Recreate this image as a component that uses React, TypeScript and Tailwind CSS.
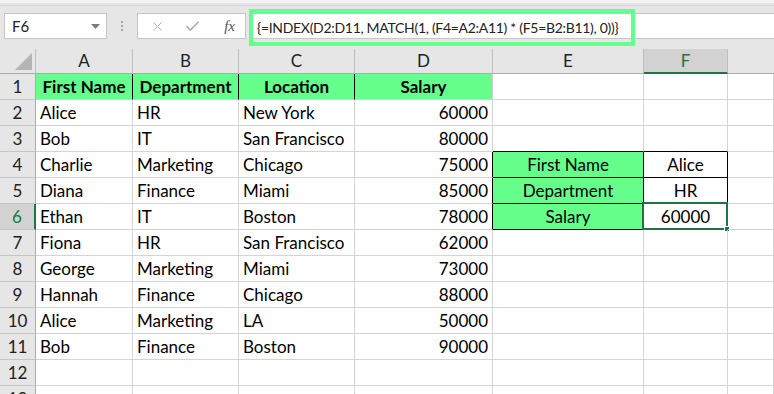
import React from "react";
import { X, Check } from "lucide-react";

type Row = {
    a?: string;
    b?: string;
    c?: string;
    d?: string;
    e?: string;
    f?: string;
};

const rows: Row[] = [
    { a: "First Name", b: "Department", c: "Location", d: "Salary" },
    { a: "Alice", b: "HR", c: "New York", d: "60000" },
    { a: "Bob", b: "IT", c: "San Francisco", d: "80000" },
    { a: "Charlie", b: "Marketing", c: "Chicago", d: "75000", e: "First Name", f: "Alice" },
    { a: "Diana", b: "Finance", c: "Miami", d: "85000", e: "Department", f: "HR" },
    { a: "Ethan", b: "IT", c: "Boston", d: "78000", e: "Salary", f: "60000" },
    { a: "Fiona", b: "HR", c: "San Francisco", d: "62000" },
    { a: "George", b: "Marketing", c: "Miami", d: "73000" },
    { a: "Hannah", b: "Finance", c: "Chicago", d: "88000" },
    { a: "Alice", b: "Marketing", c: "LA", d: "50000" },
    { a: "Bob", b: "Finance", c: "Boston", d: "90000" },
    {},
    {},
];

const font = { fontFamily: "Lato, 'Open Sans', sans-serif" };

const Cell = ({ className, children }: { className: string; children?: React.ReactNode }) => (
    <div className={`relative flex items-center px-[4px] border-r border-b whitespace-nowrap overflow-visible text-[17px] text-black ${className}`}>
        {children}
    </div>
);

const TopBar = () => (
    <div className="h-[49px] bg-[#e6e6e6] border-t-[3px] border-t-[#f3f3f3] relative">
        <div className="absolute top-[2px] left-0 right-0 h-px bg-[#d9d9d9]" />
        <div className="flex items-start pt-[10px] pl-[4px]">
            {/* name box */}
            <div className="w-[103px] h-[26px] bg-white border border-[#c6c6c6] flex items-center justify-between pl-[7px] pr-[6px]">
                <span className="text-[15px] text-[#222]">F6</span>
                <svg width="9" height="5" viewBox="0 0 9 5"><path d="M0 0h9L4.5 5z" fill="#7a7a7a" /></svg>
            </div>
            <div className="w-[30px] h-[26px] flex flex-col items-center justify-center gap-[2px]">
                <div className="w-[2px] h-[2px] bg-[#a6a6a6]" />
                <div className="w-[2px] h-[2px] bg-[#a6a6a6]" />
                <div className="w-[2px] h-[2px] bg-[#a6a6a6]" />
            </div>
            {/* cancel / enter / fx */}
            <div className="w-[109px] h-[26px] bg-white border border-[#c6c6c6] flex items-center pl-[12px] pr-[10px]">
                <X className="w-[15px] h-[15px] text-[#b0b0b0]" strokeWidth={1.6} />
                <Check className="w-[17px] h-[17px] text-[#b0b0b0] ml-[19px]" strokeWidth={2.4} />
                <span className="ml-auto italic text-[15px] text-[#555]" style={{ fontFamily: "'Liberation Serif', serif" }}>fx</span>
            </div>
            {/* formula bar */}
            <div className="flex-1 ml-[3px] h-[26px] bg-white border-y border-[#c6c6c6] relative">
                <div className="absolute left-0 top-[-5px] w-[386px] h-[37px] border-4 border-solid border-[#66ff8c] flex items-center pl-[4px]">
                    <span className="text-[14px] tracking-[-0.3px] text-[#222] whitespace-nowrap">{"{=INDEX(D2:D11, MATCH(1, (F4=A2:A11) * (F5=B2:B11), 0))}"}</span>
                </div>
            </div>
        </div>
    </div>
);

export default function App() {
    return (
        <div className="w-[774px] h-[394px] overflow-hidden bg-white" style={font}>
            <TopBar />
            <div className="grid grid-cols-[36px_97px_106px_116px_138px_151px_84px_1fr] grid-rows-[25px_repeat(13,26px)]">
                {/* column headers */}
                <div className="relative bg-[#e6e6e6] border-r border-b border-r-[#bdbdbd] border-b-[#ababab]">
                    <svg className="absolute right-[3px] bottom-[3px]" width="17" height="17" viewBox="0 0 17 17"><path d="M17 0V17H0z" fill="#b4b4b4" /></svg>
                </div>
                {["A", "B", "C", "D", "E"].map((c) => (
                    <div key={c} className="flex items-center justify-center bg-[#e6e6e6] border-r border-b border-r-[#bdbdbd] border-b-[#ababab] text-[17px] text-[#222]">{c}</div>
                ))}
                <div className="flex items-center justify-center bg-[#d2d2d2] border-r border-b-2 border-r-[#bdbdbd] border-b-[#217346] text-[17px] text-[#217346]">F</div>
                <div className="bg-[#e6e6e6] border-b border-b-[#ababab]" />

                {rows.map((r, i) => {
                    const n = i + 1;
                    const head = n === 1;
                    const inTable = n >= 4 && n <= 6;
                    return (
                        <React.Fragment key={n}>
                            {n === 6 ? (
                                <div className="flex items-center justify-center bg-[#d2d2d2] border-r-2 border-b border-r-[#217346] border-b-[#c6c6c6] text-[17px] text-[#217346]">{n}</div>
                            ) : (
                                <div className="flex items-center justify-center bg-[#e6e6e6] border-r border-b border-r-[#ababab] border-b-[#c6c6c6] text-[17px] text-[#222]">{n}</div>
                            )}
                            {head ? (
                                <>
                                    <Cell className="justify-center font-bold bg-[#66ff8c] border-r-black border-b-[#d4d4d4]">{r.a}</Cell>
                                    <Cell className="justify-center font-bold bg-[#66ff8c] border-r-black border-b-[#d4d4d4]">{r.b}</Cell>
                                    <Cell className="justify-center font-bold bg-[#66ff8c] border-r-black border-b-[#d4d4d4]">{r.c}</Cell>
                                    <Cell className="justify-center font-bold bg-[#66ff8c] border-r-[#d4d4d4] border-b-[#d4d4d4]">{r.d}</Cell>
                                </>
                            ) : (
                                <>
                                    <Cell className="border-r-[#d4d4d4] border-b-[#d4d4d4]">{r.a}</Cell>
                                    <Cell className="border-r-[#d4d4d4] border-b-[#d4d4d4]">{r.b}</Cell>
                                    <Cell className="border-r-[#d4d4d4] border-b-[#d4d4d4]">{r.c}</Cell>
                                    <Cell className={`justify-end ${inTable ? "border-r-black" : "border-r-[#d4d4d4]"} border-b-[#d4d4d4]`}>{r.d}</Cell>
                                </>
                            )}
                            {inTable ? (
                                <>
                                    <Cell className="justify-center bg-[#66ff8c] border-r-black border-b-black">{r.e}</Cell>
                                    <Cell className="justify-center border-r-black border-b-black">
                                        {r.f}
                                        {n === 6 && (
                                            <div className="absolute left-[-2px] top-[-2px] right-[-1px] bottom-[-1px] border-2 border-[#217346]">
                                                <div className="absolute right-[-4px] bottom-[-4px] w-[6px] h-[6px] bg-[#217346] border border-white" />
                                            </div>
                                        )}
                                    </Cell>
                                </>
                            ) : (
                                <>
                                    <Cell className={`border-r-[#d4d4d4] ${n === 3 ? "border-b-black" : "border-b-[#d4d4d4]"}`}>{r.e}</Cell>
                                    <Cell className={`border-r-[#d4d4d4] ${n === 3 ? "border-b-black" : "border-b-[#d4d4d4]"}`}>{r.f}</Cell>
                                </>
                            )}
                            <Cell className="border-r-[#d4d4d4] border-b-[#d4d4d4]" />
                        </React.Fragment>
                    );
                })}
            </div>
        </div>
    );
}
